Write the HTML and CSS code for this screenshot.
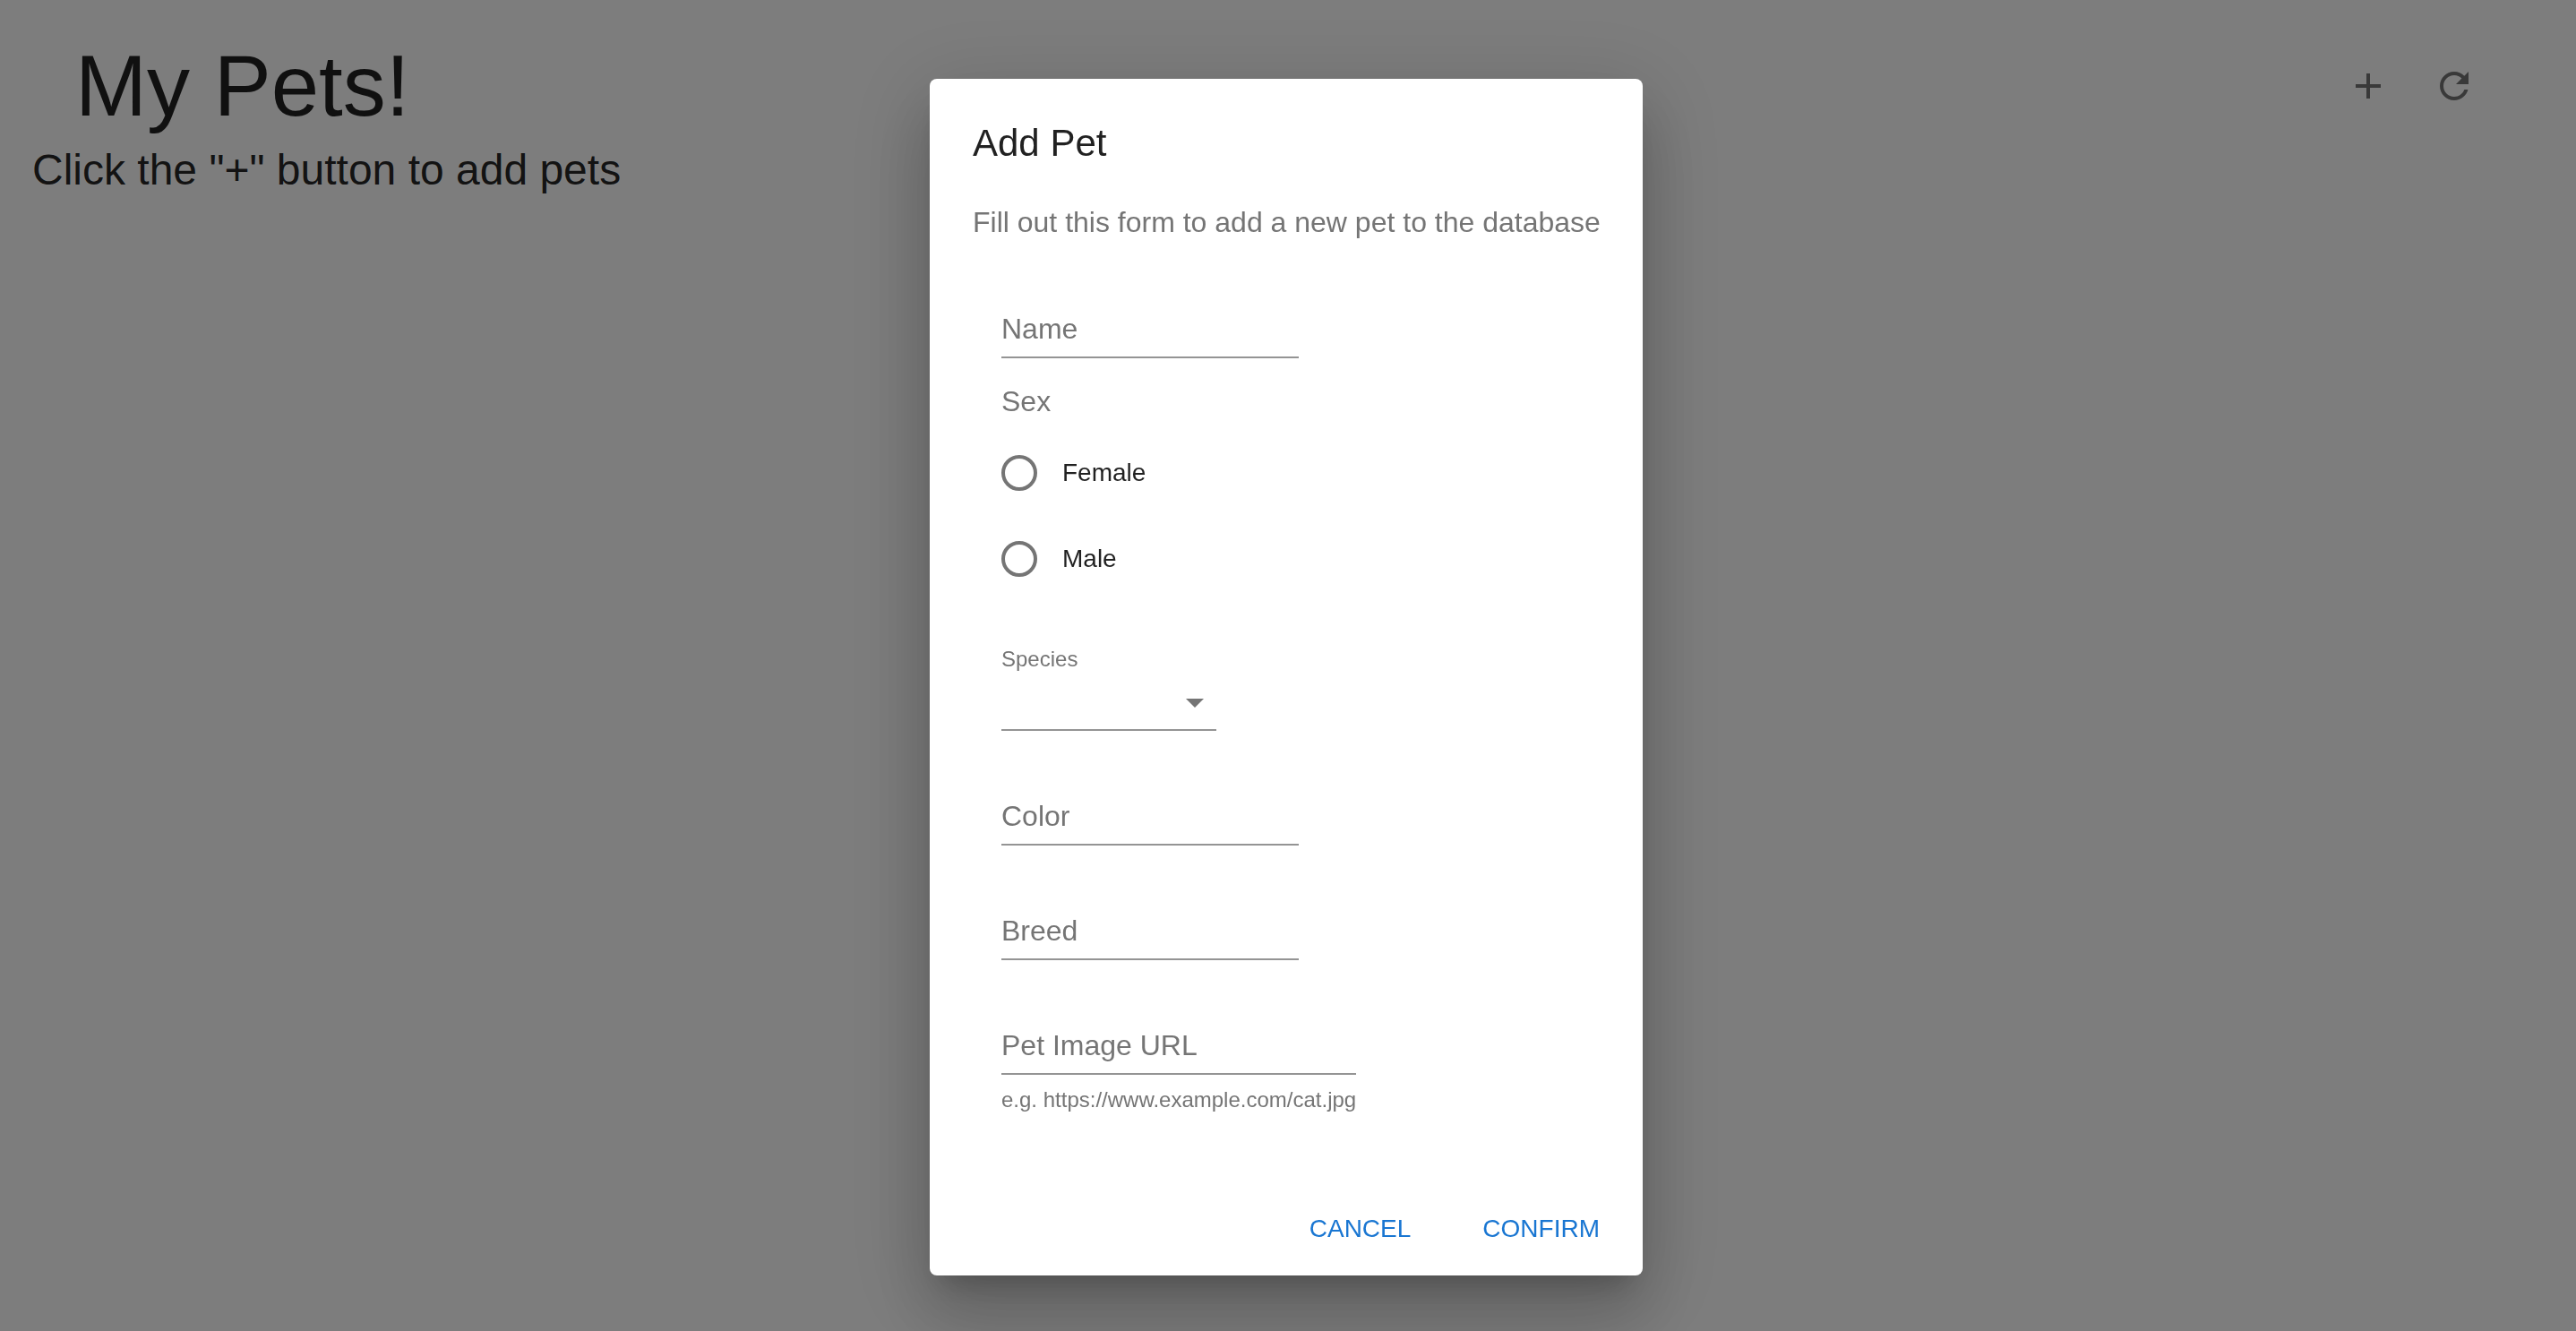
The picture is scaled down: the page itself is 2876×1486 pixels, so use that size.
FILE: index.html
```html
<!DOCTYPE html>
<html lang="en">
<head>
  <meta charset="utf-8">
  <meta name="viewport" content="width=device-width, initial-scale=1">
  <title>My Pets!</title>
  <link rel="stylesheet" href="styles.css">
</head>
<body>
  <header class="toolbar">
    <h1 class="toolbar-title">My Pets!</h1>
    <div class="toolbar-actions">
      <button class="icon-button" type="button" aria-label="Add pet">
        <svg class="icon" viewBox="0 0 24 24" aria-hidden="true"><path d="M19 13h-6v6h-2v-6H5v-2h6V5h2v6h6v2z"/></svg>
      </button>
      <button class="icon-button" type="button" aria-label="Refresh">
        <svg class="icon" viewBox="0 0 24 24" aria-hidden="true"><path d="M17.65 6.35C16.2 4.9 14.21 4 12 4c-4.42 0-7.99 3.58-7.99 8s3.57 8 7.99 8c3.73 0 6.84-2.55 7.73-6h-2.08c-.82 2.33-3.04 4-5.65 4-3.31 0-6-2.69-6-6s2.69-6 6-6c1.66 0 3.14.69 4.22 1.78L13 11h7V4l-2.35 2.35z"/></svg>
      </button>
    </div>
  </header>
  <main>
    <p class="hint">Click the "+" button to add pets</p>
  </main>

  <div class="backdrop">
    <dialog class="dialog" open aria-labelledby="dialog-title" aria-describedby="dialog-text">
      <h2 class="dialog-title" id="dialog-title">Add Pet</h2>
      <p class="dialog-text" id="dialog-text">Fill out this form to add a new pet to the database</p>
      <form>
        <div class="fields">
          <div class="field">
            <label class="field-label" for="name">Name</label>
            <input class="field-input" id="name" type="text">
          </div>
          <fieldset class="radio-group">
            <legend class="radio-legend">Sex</legend>
            <label class="radio-row"><input class="radio" type="radio" name="sex" value="female">Female</label>
            <label class="radio-row"><input class="radio" type="radio" name="sex" value="male">Male</label>
          </fieldset>
          <div class="select-field">
            <label class="select-label" for="species">Species</label>
            <div class="select-box">
              <select class="select" id="species">
                <option value=""></option>
                <option value="cat">Cat</option>
                <option value="dog">Dog</option>
              </select>
              <svg class="icon select-arrow" viewBox="0 0 24 24" aria-hidden="true"><path d="M7 10l5 5 5-5z"/></svg>
            </div>
          </div>
          <div class="field">
            <label class="field-label" for="color">Color</label>
            <input class="field-input" id="color" type="text">
          </div>
          <div class="field">
            <label class="field-label" for="breed">Breed</label>
            <input class="field-input" id="breed" type="text">
          </div>
          <div>
            <div class="field field-wide">
              <label class="field-label" for="image-url">Pet Image URL</label>
              <input class="field-input" id="image-url" type="text" aria-describedby="image-help">
            </div>
            <p class="field-help" id="image-help">e.g. https://www.example.com/cat.jpg</p>
          </div>
        </div>
        <div class="dialog-actions">
          <button class="text-button" type="button">CANCEL</button>
          <button class="text-button" type="button">CONFIRM</button>
        </div>
      </form>
    </dialog>
  </div>
</body>
</html>
```

FILE: styles.css
```css
* {
  box-sizing: border-box;
}

body {
  margin: 0;
  min-height: 100vh;
  padding-top: 40px;
  background: #fafafa;
  color: rgba(0, 0, 0, 0.87);
  font-family: "Liberation Sans", Helvetica, Arial, sans-serif;
  font-size: 32px;
}

h1,
h2,
p {
  margin: 0;
  font-weight: 400;
}

button,
input,
select {
  font: inherit;
}

/* Page header */
.toolbar {
  display: flex;
  align-items: center;
  justify-content: space-between;
  padding: 0 88px 0 84px;
}

.toolbar-title {
  font-size: 96px;
  line-height: 112px;
}

.toolbar-actions {
  display: flex;
}

.icon-button {
  display: flex;
  padding: 24px;
  border: 0;
  border-radius: 50%;
  background: none;
  color: rgba(0, 0, 0, 0.54);
  cursor: pointer;
}

.icon {
  width: 48px;
  height: 48px;
  fill: currentColor;
}

.hint {
  padding: 8px 36px;
  font-size: 48px;
  line-height: 60px;
}

/* Modal */
.backdrop {
  position: fixed;
  inset: 0;
  display: flex;
  align-items: flex-start;
  justify-content: center;
  padding: 88px 4px 0 0;
  overflow: auto;
  background: rgba(0, 0, 0, 0.5);
}

.dialog {
  position: static;
  width: 796px;
  max-width: 100%;
  margin: 0;
  padding: 40px 0 16px;
  border: 0;
  border-radius: 8px;
  background: #fff;
  color: rgba(0, 0, 0, 0.87);
  box-shadow:
    0 22px 30px -14px rgba(0, 0, 0, 0.2),
    0 48px 76px 6px rgba(0, 0, 0, 0.14),
    0 18px 92px 16px rgba(0, 0, 0, 0.12);
}

.dialog-title {
  padding: 0 48px;
  font-size: 42px;
  line-height: 64px;
}

.dialog-text {
  padding: 32px 32px 32px 48px;
  color: #757575;
  line-height: 48px;
}

.fields {
  display: flex;
  flex-direction: column;
  align-items: flex-start;
  gap: 32px;
  padding: 0 80px;
}

/* Text field: the resting label lies in the same cell as its input */
.field {
  display: grid;
  width: 332px;
  padding-top: 40px;
}

.field-wide {
  width: 396px;
}

.field-label,
.field-input {
  grid-area: 1 / 1;
}

.field-label {
  align-self: start;
  color: #757575;
  line-height: 46px;
  pointer-events: none;
}

.field-input {
  width: 100%;
  height: 56px;
  padding: 0;
  border: 0;
  border-bottom: 2px solid #949494;
  background: none;
  outline: 0;
}

.field-help {
  padding-top: 8px;
  color: #757575;
  font-size: 24px;
  line-height: 40px;
}

/* Radio group */
.radio-group {
  margin: 0;
  padding: 0 0 16px;
  border: 0;
}

.radio-legend {
  padding: 0 0 16px;
  color: #757575;
  line-height: 32px;
}

.radio-row {
  display: flex;
  align-items: center;
  gap: 28px;
  height: 96px;
  font-size: 28px;
}

.radio {
  width: 40px;
  height: 40px;
  margin: 0;
  border: 4px solid #757575;
  border-radius: 50%;
  appearance: none;
}

.radio:checked {
  border-color: #1976d2;
  background: radial-gradient(#1976d2 50%, transparent 54%);
}

/* Select */
.select-label {
  display: block;
  color: #757575;
  font-size: 24px;
  line-height: 32px;
}

.select-box {
  display: grid;
  align-items: center;
  width: 240px;
}

.select,
.select-arrow {
  grid-area: 1 / 1;
}

.select {
  width: 100%;
  height: 64px;
  padding: 0;
  border: 0;
  border-bottom: 2px solid #949494;
  border-radius: 0;
  background: none;
  outline: 0;
  appearance: none;
}

.select-arrow {
  justify-self: end;
  color: #757575;
  pointer-events: none;
}

/* Dialog buttons */
.dialog-actions {
  display: flex;
  justify-content: flex-end;
  gap: 48px;
  padding: 88px 32px 0;
}

.text-button {
  height: 72px;
  padding: 0 16px;
  border: 0;
  border-radius: 8px;
  background: none;
  color: #1976d2;
  font-size: 28px;
  cursor: pointer;
}
```
